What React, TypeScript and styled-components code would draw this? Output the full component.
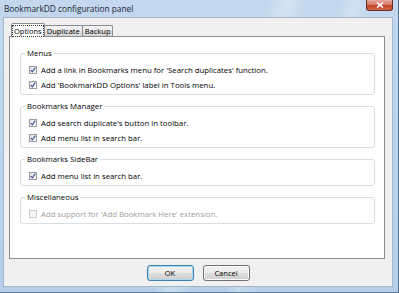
import styled, { createGlobalStyle } from "styled-components";

const GlobalStyle = createGlobalStyle`
  html, body {
    margin: 0;
    padding: 0;
    background: #ffffff;
  }
  body {
    font-family: "Open Sans", "Noto Sans", sans-serif;
  }
`;

const Window = styled.div`
  width: 399px;
  height: 293px;
  box-sizing: border-box;
  display: flex;
  flex-direction: column;
  background:
    linear-gradient(112deg, transparent 52%, rgba(255, 255, 255, 0.28) 56%, transparent 60%),
    linear-gradient(112deg, transparent 66%, rgba(255, 255, 255, 0.22) 69%, transparent 73%),
    linear-gradient(180deg, #c3d8ee 0%, #b6cfe8 100%);
  border-right: 1px solid #4f6f8e;
  border-bottom: 1px solid #5c7f9f;
`;

const TitleBar = styled.div`
  height: 17px;
  display: flex;
  align-items: flex-start;
  justify-content: space-between;
`;

const Title = styled.span`
  padding: 3px 0 0 4px;
  font-size: 8.3px;
  line-height: 11px;
  color: #1b2532;
`;

const CloseButton = styled.div`
  width: 27px;
  height: 11px;
  margin-right: 5px;
  box-sizing: border-box;
  border: 1px solid #6b2a20;
  border-top: none;
  border-radius: 0 0 3px 3px;
  background: linear-gradient(180deg, #e8a89c 0%, #d5786a 45%, #c2432d 55%, #d4684e 100%);
  display: flex;
  align-items: center;
  justify-content: center;
`;

const Body = styled.div`
  flex: 1;
  display: flex;
  padding: 0 5px 5px 3px;
`;

const Client = styled.div`
  flex: 1;
  display: flex;
  flex-direction: column;
  background: #f0f0f0;
  border: 1px solid #a3b6ca;
  padding: 5px 7px 0 5px;
`;

const TabStrip = styled.div`
  display: flex;
  align-items: flex-end;
  height: 13px;
  padding-left: 2px;
`;

const Tab = styled.div<{ $active?: boolean }>`
  position: relative;
  box-sizing: border-box;
  border: 1px solid #898c95;
  border-bottom: none;
  border-radius: 2px 2px 0 0;
  font-size: 7.5px;
  color: #000;
  display: flex;
  align-items: center;
  justify-content: center;
  height: ${(p) => (p.$active ? "14px" : "11px")};
  margin-bottom: ${(p) => (p.$active ? "-1px" : "0")};
  padding: 0 ${(p) => (p.$active ? "1px" : "2px")};
  margin-left: ${(p) => (p.$active ? "0" : "-1px")};
  background: ${(p) =>
    p.$active ? "#ffffff" : "linear-gradient(180deg, #f3f3f3 0%, #ebebeb 50%, #dedede 51%, #d6d6d6 100%)"};
  z-index: ${(p) => (p.$active ? 1 : 0)};
`;

const FocusLabel = styled.span`
  outline: 1px dotted #333;
  outline-offset: 0;
  padding: 0 1px;
  line-height: 10px;
`;

const Panel = styled.div`
  height: 223px;
  box-sizing: border-box;
  background: #ffffff;
  border: 1px solid #898c95;
  padding: 11px 9px 0 10px;
`;

const Group = styled.fieldset`
  margin: 0 0 6px;
  padding: 4px 8px 2px;
  border: 1px solid #d5dfe5;
  border-radius: 3px;
  min-width: 0;
`;

const Legend = styled.legend`
  font-size: 7.8px;
  line-height: 10px;
  height: 10px;
  padding: 0 2px;
  margin-left: -4px;
  color: #000;
`;

const Row = styled.label<{ $disabled?: boolean }>`
  display: flex;
  align-items: center;
  gap: 4px;
  height: 15px;
  font-size: 7.8px;
  color: ${(p) => (p.$disabled ? "#a0a0a0" : "#000")};
`;

const Box = styled.span<{ $disabled?: boolean }>`
  width: 8px;
  height: 8px;
  box-sizing: border-box;
  flex: none;
  border: 1px solid ${(p) => (p.$disabled ? "#cdcdcd" : "#9a9c9e")};
  background: ${(p) =>
    p.$disabled ? "#f4f4f4" : "linear-gradient(135deg, #dde1e6 0%, #f4f5f6 60%, #ffffff 100%)"};
  display: flex;
  align-items: center;
  justify-content: center;
`;

const Buttons = styled.div`
  display: flex;
  justify-content: center;
  gap: 9px;
  margin-top: 6px;
  padding-left: 2px;
`;

const Button = styled.div<{ $default?: boolean }>`
  width: 47px;
  height: 16px;
  box-sizing: border-box;
  border: 1px solid ${(p) => (p.$default ? "#3c7fb1" : "#707070")};
  border-radius: 3px;
  box-shadow: ${(p) => (p.$default ? "inset 0 0 0 1px #a6dcf5" : "inset 0 0 0 1px #fcfcfc")};
  background: linear-gradient(180deg, #f2f2f2 0%, #ebebeb 48%, #dddddd 52%, #cfcfcf 100%);
  font-size: 7.5px;
  display: flex;
  align-items: center;
  justify-content: center;
  color: #000;
`;

function Checkbox({ checked, disabled }: { checked?: boolean; disabled?: boolean }) {
  return (
    <Box $disabled={disabled}>
      {checked && (
        <svg width="6" height="6" viewBox="0 0 6 6">
          <path d="M0.8 3.2 L2.3 4.9 L5.3 0.6" fill="none" stroke="#3a4f92" strokeWidth="1.1" />
        </svg>
      )}
    </Box>
  );
}

const groups = [
  {
    title: "Menus",
    items: [
      "Add a link in Bookmarks menu for 'Search duplicates' function.",
      "Add 'BookmarkDD Options' label in Tools menu.",
    ],
  },
  {
    title: "Bookmarks Manager",
    items: ["Add search duplicate's button in toolbar.", "Add menu list in search bar."],
  },
  { title: "Bookmarks SideBar", items: ["Add menu list in search bar."] },
];

export default function App() {
  return (
    <>
      <GlobalStyle />
      <Window>
        <TitleBar>
          <Title>BookmarkDD configuration panel</Title>
          <CloseButton>
            <svg width="8" height="6" viewBox="0 0 8 6">
              <path d="M1 0.5 L7 5.5 M7 0.5 L1 5.5" stroke="#ffffff" strokeWidth="1.6" />
            </svg>
          </CloseButton>
        </TitleBar>
        <Body>
          <Client>
            <TabStrip>
              <Tab $active>
                <FocusLabel>Options</FocusLabel>
              </Tab>
              <Tab>Duplicate</Tab>
              <Tab>Backup</Tab>
            </TabStrip>
            <Panel>
              {groups.map((g) => (
                <Group key={g.title}>
                  <Legend>{g.title}</Legend>
                  {g.items.map((item) => (
                    <Row key={item}>
                      <Checkbox checked />
                      {item}
                    </Row>
                  ))}
                </Group>
              ))}
              <Group>
                <Legend>Miscellaneous</Legend>
                <Row $disabled>
                  <Checkbox disabled />
                  Add support for 'Add Bookmark Here' extension.
                </Row>
              </Group>
            </Panel>
            <Buttons>
              <Button $default>OK</Button>
              <Button>Cancel</Button>
            </Buttons>
          </Client>
        </Body>
      </Window>
    </>
  );
}
